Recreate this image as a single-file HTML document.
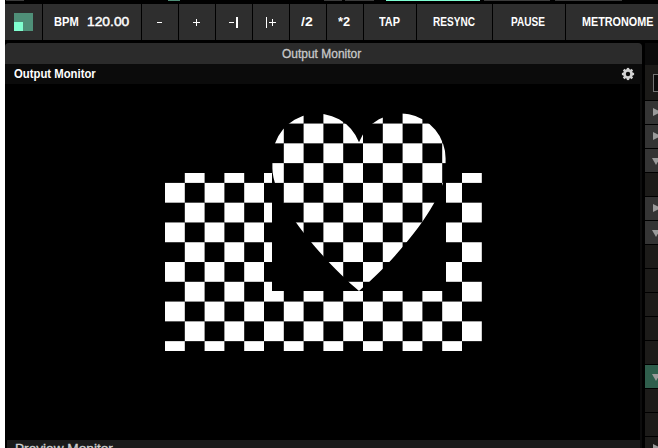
<!DOCTYPE html>
<html><head><meta charset="utf-8"><style>
html,body{margin:0;padding:0;}
body{width:658px;height:448px;overflow:hidden;position:relative;background:#000;font-family:"Liberation Sans",sans-serif;}
.btn{position:absolute;top:4px;height:36px;background:#2e2e2e;color:#fff;font-weight:bold;font-size:12px;display:flex;align-items:center;justify-content:center;white-space:nowrap;}
.lbl{position:absolute;line-height:20px;white-space:nowrap;transform-origin:0 0;}
</style></head><body>
<div style="position:absolute;left:0;top:0;width:5px;height:448px;background:#fff"></div>
<div style="position:absolute;left:6px;top:0;width:18px;height:1px;background:#3c3c3c"></div><div style="position:absolute;left:168px;top:0;width:12px;height:1px;background:#4f8f78"></div><div style="position:absolute;left:324px;top:0;width:18px;height:1px;background:#3c3c3c"></div><div style="position:absolute;left:345px;top:0;width:29px;height:1px;background:#3c3c3c"></div><div style="position:absolute;left:386px;top:0;width:94px;height:1px;background:#7fffd4"></div><div style="position:absolute;left:484px;top:0;width:66px;height:1px;background:#3c3c3c"></div><div style="position:absolute;left:555px;top:0;width:67px;height:1px;background:#3c3c3c"></div>
<div class="btn" style="left:5px;width:37px"></div><div class="btn" style="left:43px;width:98px"></div><div class="btn" style="left:142px;width:36px"></div><div class="btn" style="left:179px;width:36px"></div><div class="btn" style="left:216px;width:36px"></div><div class="btn" style="left:253px;width:36px"></div><div class="btn" style="left:290px;width:36px"></div><div class="btn" style="left:327px;width:36px"></div><div class="btn" style="left:364px;width:52px"></div><div class="btn" style="left:417px;width:75px"></div><div class="btn" style="left:493px;width:72px"></div><div class="btn" style="left:566px;width:94px"></div>
<div style="position:absolute;left:14px;top:13px;width:19px;height:18px;background:#4f8f78"></div>
<div style="position:absolute;left:14px;top:22px;width:9px;height:9px;background:#80ffd0"></div>

<!-- panel -->
<div style="position:absolute;left:5px;top:43px;width:637px;height:21px;background:#2b2b2b;border-radius:4px 4px 0 0;"></div>
<div style="position:absolute;left:5px;top:64px;width:637px;height:20px;background:#0b0b0b"></div>

<svg style="position:absolute;left:619.9px;top:66px" width="16" height="16" viewBox="-8 -8 16 16">
<g fill="#d2d2d2"><rect x="-1.2" y="-6.1" width="2.4" height="2.5" transform="rotate(0)"/><rect x="-1.2" y="-6.1" width="2.4" height="2.5" transform="rotate(45)"/><rect x="-1.2" y="-6.1" width="2.4" height="2.5" transform="rotate(90)"/><rect x="-1.2" y="-6.1" width="2.4" height="2.5" transform="rotate(135)"/><rect x="-1.2" y="-6.1" width="2.4" height="2.5" transform="rotate(180)"/><rect x="-1.2" y="-6.1" width="2.4" height="2.5" transform="rotate(225)"/><rect x="-1.2" y="-6.1" width="2.4" height="2.5" transform="rotate(270)"/><rect x="-1.2" y="-6.1" width="2.4" height="2.5" transform="rotate(315)"/>
<circle r="4.9"/></g><circle r="2.2" fill="#0b0b0b"/></svg>
<div style="position:absolute;left:5px;top:84px;width:635px;height:356px;background:#000"></div>
<div style="position:absolute;left:640px;top:84px;width:2px;height:364px;background:#0c0c0c"></div>
<div style="position:absolute;left:7px;top:440px;width:633px;height:8px;background:#1a1a1a"></div>
<!-- right panel -->
<div style="position:absolute;left:645px;top:43px;width:13px;height:22px;background:#0b0b0b"></div>
<div style="position:absolute;left:645px;top:65px;width:13px;height:35px;background:#1b1a18"></div>
<div style="position:absolute;left:653px;top:74px;width:10px;height:16px;border:1px solid #727272;background:#0b0b0b"></div>
<div style="position:absolute;left:645px;top:101px;width:13px;height:23px;background:#343434"></div><div style="position:absolute;left:653px;top:108.0px;width:0;height:0;border-top:4.5px solid transparent;border-bottom:4.5px solid transparent;border-left:8px solid #9a9a9a"></div><div style="position:absolute;left:645px;top:125px;width:13px;height:23px;background:#343434"></div><div style="position:absolute;left:653px;top:132.0px;width:0;height:0;border-top:4.5px solid transparent;border-bottom:4.5px solid transparent;border-left:8px solid #9a9a9a"></div><div style="position:absolute;left:645px;top:149px;width:13px;height:23px;background:#343434"></div><div style="position:absolute;left:652px;top:158.0px;width:0;height:0;border-left:4.5px solid transparent;border-right:4.5px solid transparent;border-top:7px solid #9a9a9a"></div><div style="position:absolute;left:645px;top:173px;width:13px;height:23px;background:#1c1b19"></div><div style="position:absolute;left:645px;top:197px;width:13px;height:23px;background:#343434"></div><div style="position:absolute;left:653px;top:204.0px;width:0;height:0;border-top:4.5px solid transparent;border-bottom:4.5px solid transparent;border-left:8px solid #9a9a9a"></div><div style="position:absolute;left:645px;top:221px;width:13px;height:23px;background:#343434"></div><div style="position:absolute;left:652px;top:230.0px;width:0;height:0;border-left:4.5px solid transparent;border-right:4.5px solid transparent;border-top:7px solid #9a9a9a"></div><div style="position:absolute;left:645px;top:245px;width:13px;height:23px;background:#1c1b19"></div><div style="position:absolute;left:645px;top:269px;width:13px;height:23px;background:#1c1b19"></div><div style="position:absolute;left:645px;top:293px;width:13px;height:23px;background:#1c1b19"></div><div style="position:absolute;left:645px;top:317px;width:13px;height:23px;background:#1c1b19"></div><div style="position:absolute;left:645px;top:341px;width:13px;height:23px;background:#1c1b19"></div><div style="position:absolute;left:645px;top:365px;width:13px;height:23px;background:#2f5e4c"></div><div style="position:absolute;left:652px;top:374.0px;width:0;height:0;border-left:4.5px solid transparent;border-right:4.5px solid transparent;border-top:7px solid #9a9a9a"></div><div style="position:absolute;left:645px;top:389px;width:13px;height:23px;background:#1c1b19"></div><div style="position:absolute;left:645px;top:413px;width:13px;height:23px;background:#1c1b19"></div><div style="position:absolute;left:645px;top:437px;width:13px;height:23px;background:#1c1b19"></div><div style="position:absolute;left:653px;top:444.0px;width:0;height:0;border-top:4.5px solid transparent;border-bottom:4.5px solid transparent;border-left:8px solid #9a9a9a"></div>
<svg width="658" height="448" style="position:absolute;left:0;top:0">
<defs><clipPath id="cp"><path d="M165,173 H272 V291 H446 V173 H482 V351 H165 Z M359.0,291.0 C326.9,263.9 272.40,203.5 272.40,168.2 L272.40,158.4 A44.8,44.8 0 0 1 359.00,142.28 A44.8,44.8 0 0 1 445.60,158.4 L445.60,168.2 C445.60,203.5 391.10,263.9 359.0,291.0 Z"/></clipPath></defs>
<g clip-path="url(#cp)" fill="#fff"><rect x="165.00" y="103.78" width="19.80" height="19.78"/><rect x="165.00" y="143.34" width="19.80" height="19.78"/><rect x="165.00" y="182.90" width="19.80" height="19.78"/><rect x="165.00" y="222.46" width="19.80" height="19.78"/><rect x="165.00" y="262.02" width="19.80" height="19.78"/><rect x="165.00" y="301.58" width="19.80" height="19.78"/><rect x="165.00" y="341.14" width="19.80" height="19.78"/><rect x="184.80" y="123.56" width="19.80" height="19.78"/><rect x="184.80" y="163.12" width="19.80" height="19.78"/><rect x="184.80" y="202.68" width="19.80" height="19.78"/><rect x="184.80" y="242.24" width="19.80" height="19.78"/><rect x="184.80" y="281.80" width="19.80" height="19.78"/><rect x="184.80" y="321.36" width="19.80" height="19.78"/><rect x="204.60" y="103.78" width="19.80" height="19.78"/><rect x="204.60" y="143.34" width="19.80" height="19.78"/><rect x="204.60" y="182.90" width="19.80" height="19.78"/><rect x="204.60" y="222.46" width="19.80" height="19.78"/><rect x="204.60" y="262.02" width="19.80" height="19.78"/><rect x="204.60" y="301.58" width="19.80" height="19.78"/><rect x="204.60" y="341.14" width="19.80" height="19.78"/><rect x="224.40" y="123.56" width="19.80" height="19.78"/><rect x="224.40" y="163.12" width="19.80" height="19.78"/><rect x="224.40" y="202.68" width="19.80" height="19.78"/><rect x="224.40" y="242.24" width="19.80" height="19.78"/><rect x="224.40" y="281.80" width="19.80" height="19.78"/><rect x="224.40" y="321.36" width="19.80" height="19.78"/><rect x="244.20" y="103.78" width="19.80" height="19.78"/><rect x="244.20" y="143.34" width="19.80" height="19.78"/><rect x="244.20" y="182.90" width="19.80" height="19.78"/><rect x="244.20" y="222.46" width="19.80" height="19.78"/><rect x="244.20" y="262.02" width="19.80" height="19.78"/><rect x="244.20" y="301.58" width="19.80" height="19.78"/><rect x="244.20" y="341.14" width="19.80" height="19.78"/><rect x="264.00" y="123.56" width="19.80" height="19.78"/><rect x="264.00" y="163.12" width="19.80" height="19.78"/><rect x="264.00" y="202.68" width="19.80" height="19.78"/><rect x="264.00" y="242.24" width="19.80" height="19.78"/><rect x="264.00" y="281.80" width="19.80" height="19.78"/><rect x="264.00" y="321.36" width="19.80" height="19.78"/><rect x="283.80" y="103.78" width="19.80" height="19.78"/><rect x="283.80" y="143.34" width="19.80" height="19.78"/><rect x="283.80" y="182.90" width="19.80" height="19.78"/><rect x="283.80" y="222.46" width="19.80" height="19.78"/><rect x="283.80" y="262.02" width="19.80" height="19.78"/><rect x="283.80" y="301.58" width="19.80" height="19.78"/><rect x="283.80" y="341.14" width="19.80" height="19.78"/><rect x="303.60" y="123.56" width="19.80" height="19.78"/><rect x="303.60" y="163.12" width="19.80" height="19.78"/><rect x="303.60" y="202.68" width="19.80" height="19.78"/><rect x="303.60" y="242.24" width="19.80" height="19.78"/><rect x="303.60" y="281.80" width="19.80" height="19.78"/><rect x="303.60" y="321.36" width="19.80" height="19.78"/><rect x="323.40" y="103.78" width="19.80" height="19.78"/><rect x="323.40" y="143.34" width="19.80" height="19.78"/><rect x="323.40" y="182.90" width="19.80" height="19.78"/><rect x="323.40" y="222.46" width="19.80" height="19.78"/><rect x="323.40" y="262.02" width="19.80" height="19.78"/><rect x="323.40" y="301.58" width="19.80" height="19.78"/><rect x="323.40" y="341.14" width="19.80" height="19.78"/><rect x="343.20" y="123.56" width="19.80" height="19.78"/><rect x="343.20" y="163.12" width="19.80" height="19.78"/><rect x="343.20" y="202.68" width="19.80" height="19.78"/><rect x="343.20" y="242.24" width="19.80" height="19.78"/><rect x="343.20" y="281.80" width="19.80" height="19.78"/><rect x="343.20" y="321.36" width="19.80" height="19.78"/><rect x="363.00" y="103.78" width="19.80" height="19.78"/><rect x="363.00" y="143.34" width="19.80" height="19.78"/><rect x="363.00" y="182.90" width="19.80" height="19.78"/><rect x="363.00" y="222.46" width="19.80" height="19.78"/><rect x="363.00" y="262.02" width="19.80" height="19.78"/><rect x="363.00" y="301.58" width="19.80" height="19.78"/><rect x="363.00" y="341.14" width="19.80" height="19.78"/><rect x="382.80" y="123.56" width="19.80" height="19.78"/><rect x="382.80" y="163.12" width="19.80" height="19.78"/><rect x="382.80" y="202.68" width="19.80" height="19.78"/><rect x="382.80" y="242.24" width="19.80" height="19.78"/><rect x="382.80" y="281.80" width="19.80" height="19.78"/><rect x="382.80" y="321.36" width="19.80" height="19.78"/><rect x="402.60" y="103.78" width="19.80" height="19.78"/><rect x="402.60" y="143.34" width="19.80" height="19.78"/><rect x="402.60" y="182.90" width="19.80" height="19.78"/><rect x="402.60" y="222.46" width="19.80" height="19.78"/><rect x="402.60" y="262.02" width="19.80" height="19.78"/><rect x="402.60" y="301.58" width="19.80" height="19.78"/><rect x="402.60" y="341.14" width="19.80" height="19.78"/><rect x="422.40" y="123.56" width="19.80" height="19.78"/><rect x="422.40" y="163.12" width="19.80" height="19.78"/><rect x="422.40" y="202.68" width="19.80" height="19.78"/><rect x="422.40" y="242.24" width="19.80" height="19.78"/><rect x="422.40" y="281.80" width="19.80" height="19.78"/><rect x="422.40" y="321.36" width="19.80" height="19.78"/><rect x="442.20" y="103.78" width="19.80" height="19.78"/><rect x="442.20" y="143.34" width="19.80" height="19.78"/><rect x="442.20" y="182.90" width="19.80" height="19.78"/><rect x="442.20" y="222.46" width="19.80" height="19.78"/><rect x="442.20" y="262.02" width="19.80" height="19.78"/><rect x="442.20" y="301.58" width="19.80" height="19.78"/><rect x="442.20" y="341.14" width="19.80" height="19.78"/><rect x="462.00" y="123.56" width="19.80" height="19.78"/><rect x="462.00" y="163.12" width="19.80" height="19.78"/><rect x="462.00" y="202.68" width="19.80" height="19.78"/><rect x="462.00" y="242.24" width="19.80" height="19.78"/><rect x="462.00" y="281.80" width="19.80" height="19.78"/><rect x="462.00" y="321.36" width="19.80" height="19.78"/></g>
</svg>
<div class="lbl" style="left:53.97px;top:12.40px;font-size:12px;font-weight:bold;color:#fff;transform:scaleX(0.9280);">BPM</div><div class="lbl" style="left:86.84px;top:12.10px;font-size:13px;font-weight:normal;color:#fff;transform:scaleX(1.0632);-webkit-text-stroke:0.45px #fff">120.00</div><div class="lbl" style="left:301.30px;top:12.40px;font-size:12px;font-weight:bold;color:#fff;transform:scaleX(1.1700);">/2</div><div class="lbl" style="left:338.30px;top:12.40px;font-size:12px;font-weight:bold;color:#fff;transform:scaleX(1.0636);">*2</div><div class="lbl" style="left:379.10px;top:12.40px;font-size:12px;font-weight:bold;color:#fff;transform:scaleX(0.9087);">TAP</div><div class="lbl" style="left:432.56px;top:12.40px;font-size:12px;font-weight:bold;color:#fff;transform:scaleX(0.8388);">RESYNC</div><div class="lbl" style="left:510.86px;top:12.40px;font-size:12px;font-weight:bold;color:#fff;transform:scaleX(0.8385);">PAUSE</div><div class="lbl" style="left:581.50px;top:12.40px;font-size:12px;font-weight:bold;color:#fff;transform:scaleX(0.9000);">METRONOME</div><div class="lbl" style="left:282.40px;top:43.70px;font-size:12px;font-weight:normal;color:#c8c8c8;transform:scaleX(0.9975);-webkit-text-stroke:0.3px #c8c8c8">Output Monitor</div><div class="lbl" style="left:14.20px;top:64.40px;font-size:12px;font-weight:bold;color:#fff;transform:scaleX(0.9437);">Output Monitor</div><div class="lbl" style="left:14.76px;top:438.90px;font-size:12px;font-weight:normal;color:#cfcfcf;transform:scaleX(1.1376);-webkit-text-stroke:0.3px #cfcfcf">Preview Monitor</div><div style="position:absolute;left:156.5px;top:21.9px;width:5.8px;height:1.5px;background:#fff"></div><div style="position:absolute;left:193.0px;top:21.7px;width:6.8px;height:1.5px;background:#fff"></div><div style="position:absolute;left:195.65px;top:18.9px;width:1.5px;height:7.0px;background:#fff"></div><div style="position:absolute;left:228.5px;top:21.9px;width:5.5px;height:1.5px;background:#fff"></div><div style="position:absolute;left:236.3px;top:17.1px;width:1.25px;height:10.7px;background:#fff"></div><div style="position:absolute;left:265.5px;top:17.1px;width:1.25px;height:10.7px;background:#fff"></div><div style="position:absolute;left:269.1px;top:21.7px;width:7.1px;height:1.5px;background:#fff"></div><div style="position:absolute;left:271.9px;top:18.8px;width:1.5px;height:7.3px;background:#fff"></div>
</body></html>
